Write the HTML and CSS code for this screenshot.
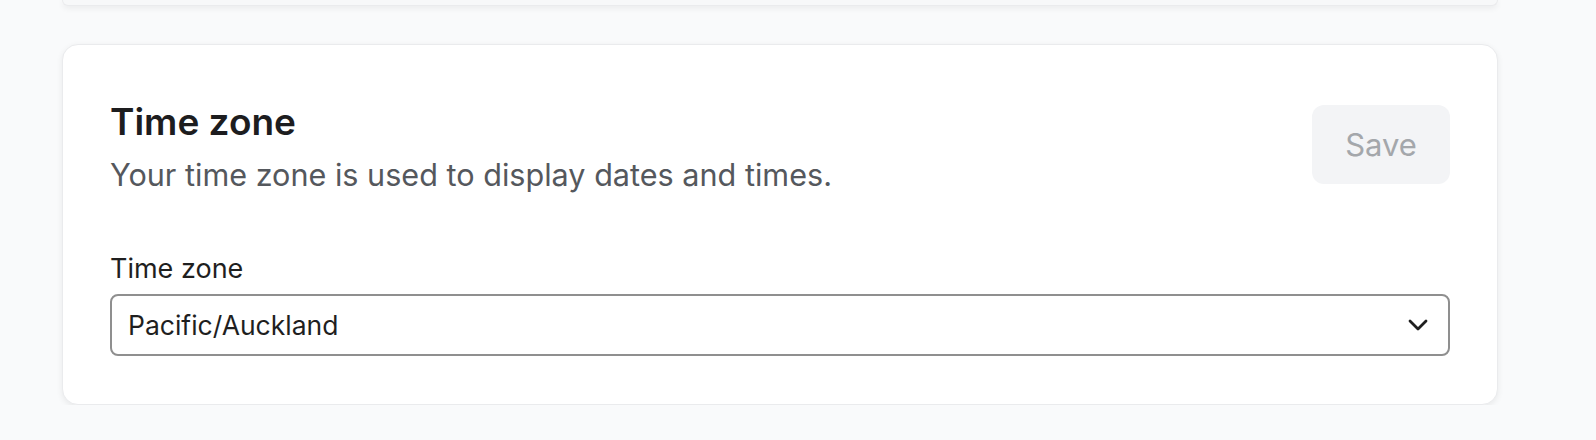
FILE: index.html
```html
<!DOCTYPE html>
<html lang="en">
<head>
<meta charset="utf-8">
<title>Time zone settings</title>
<link rel="stylesheet" href="styles.css">
</head>
<body>
<div class="page">
  <div class="card card-prev"></div>
  <section class="card">
    <div class="card-header">
      <div class="card-titles">
        <h2 class="card-title">Time zone</h2>
        <p class="card-desc">Your time zone is used to display dates and times.</p>
      </div>
      <button class="btn-save" type="button" disabled>Save</button>
    </div>
    <label class="field-label">Time zone</label>
    <div class="select">
      <span class="select-value">Pacific/Auckland</span>
      <svg class="select-chevron" width="20" height="12" viewBox="0 0 20 12" aria-hidden="true">
        <path d="M2 2 L10 10 L18 2" fill="none" stroke="#1f1f1f" stroke-width="2.8" stroke-linecap="round" stroke-linejoin="round"/>
      </svg>
    </div>
  </section>
</div>
</body>
</html>
```

FILE: styles.css
```css
html, body {
  margin: 0;
  padding: 0;
  background: #f9fafb;
  font-family: Inter, "Noto Sans", "Liberation Sans", sans-serif;
}

.page {
  width: 1436px;
  padding-left: 62px;
  display: flex;
  flex-direction: column;
  gap: 38px;
}

.card {
  background: #ffffff;
  border: 1px solid #eaebed;
  border-radius: 16px;
  box-shadow: 0 2px 6px rgba(0, 0, 0, 0.07);
  padding: 51px 47px 48px 47px;
}

.card-prev {
  height: 5px;
  padding: 0;
  border-top: none;
  border-radius: 0 0 16px 16px;
  background: #f7f8f9;
}

.card-header {
  display: flex;
  justify-content: space-between;
  align-items: flex-start;
  margin-bottom: 57px;
}

.card-title {
  margin: 0;
  font-size: 37px;
  line-height: 52px;
  font-weight: 600;
  color: #1d1d1f;
}

.card-desc {
  margin: 7px 0 0;
  font-size: 30.6px;
  line-height: 40px;
  color: #55585d;
}

.btn-save {
  margin-top: 9px;
  width: 138px;
  height: 79px;
  border: none;
  border-radius: 12px;
  background: #f3f4f6;
  color: #a4a7ab;
  font-family: inherit;
  font-size: 31px;
  padding: 0;
}

.field-label {
  display: block;
  font-size: 27px;
  line-height: 34px;
  color: #1f1f1f;
  margin-bottom: 8px;
}

.select {
  height: 58px;
  border: 2px solid #8f8f8f;
  border-radius: 8px;
  display: flex;
  align-items: center;
  justify-content: space-between;
  padding: 0 20px 0 16px;
}

.select-value {
  font-size: 26.5px;
  color: #1f1f1f;
}

.select-chevron {
  display: block;
}
```
